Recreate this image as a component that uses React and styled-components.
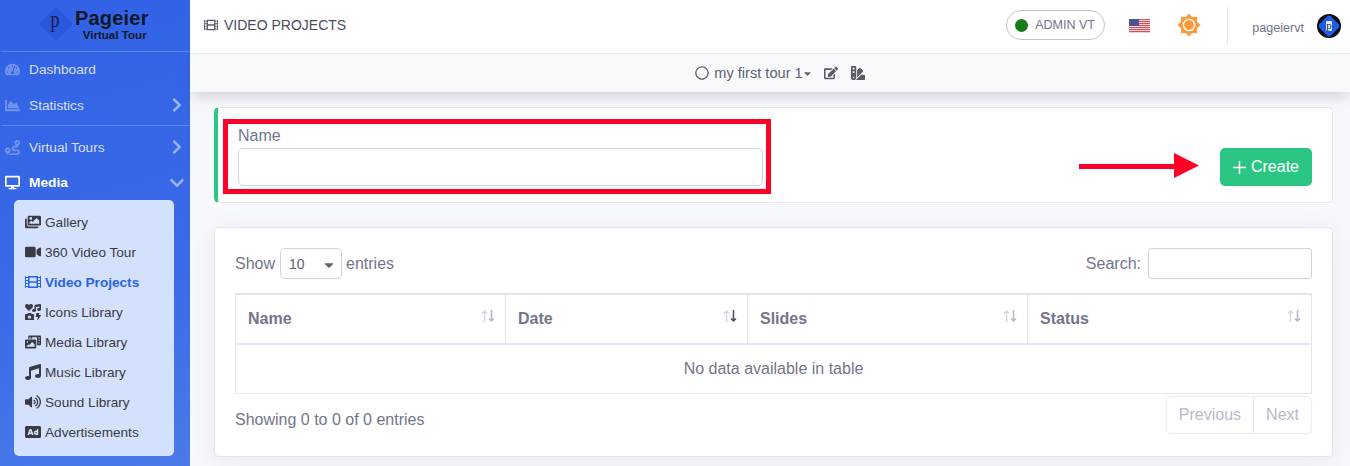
import React from "react";
import styled, { createGlobalStyle } from "styled-components";
import {
  FaTachometerAlt, FaChartArea, FaRoute, FaDesktop, FaChevronRight, FaChevronDown,
  FaImages, FaVideo, FaFilm, FaIcons, FaPhotoVideo, FaMusic, FaVolumeUp, FaAd,
  FaRegCircle, FaEdit, FaSwatchbook, FaCaretDown,
} from "react-icons/fa";

const Global = createGlobalStyle`
  html, body { margin: 0; padding: 0; height: 466px; overflow: hidden; }
  body { font-family: "Liberation Sans", Arial, sans-serif; background: #f7f8fc; color: #74758a; }
  * { box-sizing: border-box; }
`;

const Page = styled.div`display: flex; width: 1350px; height: 466px; overflow: hidden;`;

const Sidebar = styled.aside`
  width: 190px; flex: none; height: 466px; overflow: hidden;
  background: linear-gradient(165deg, #3162e6 0%, #3a6ae7 60%, #4a7be8 100%);
`;
const Brand = styled.div`
  height: 52px; margin: 0 1px; border-bottom: 1px solid rgba(255,255,255,.2);
  display: flex; align-items: flex-start; padding: 6px 0 0 37px; gap: 1px;
`;
const BrandText = styled.div`display: flex; flex-direction: column; align-items: flex-end; color: #111827; font-weight: 700;`;
const BrandName = styled.span`font-size: 20px; line-height: 22px; letter-spacing: .2px; margin-top: 1px;`;
const BrandSub = styled.span`font-size: 11.6px; line-height: 12px; margin-top: 0; padding-right: 2px;`;

const NavItem = styled.div`
  height: ${p => p.$h || 36}px; display: flex; align-items: center; padding: 0 5px 0 5px; font-size: 13.7px;
  color: ${p => p.$active ? "#fff" : "rgba(255,255,255,.8)"};
  font-weight: ${p => p.$active ? 700 : 400};
`;
const NavIcon = styled.span`
  width: 24px; flex: none; display: flex; align-items: center; font-size: 15px;
  color: ${p => p.$active ? "#fff" : "rgba(255,255,255,.3)"};
`;
const NavLabel = styled.span`flex: 1;`;
const Chevron = styled.span`display: flex; width: 16px; justify-content: center; color: rgba(255,255,255,.5); font-size: 16px;`;
const NavDivider = styled.div`height: 1px; background: rgba(255,255,255,.2); margin: 2px 1px 3px;`;

const SubPanel = styled.div`
  margin: 0 16px 0 14px; height: 256px; background: #d3e1fd; border-radius: 5px; padding: 7px 0 0 11px;
`;
const SubItem = styled.div`
  height: 30px; display: flex; align-items: center; font-size: 13.6px; white-space: nowrap;
  color: ${p => p.$active ? "#2b62e6" : "#3a3b45"};
  font-weight: ${p => p.$active ? 700 : 400};
`;
const SubIcon = styled.span`width: 16px; margin-right: 4px; flex: none; display: flex; justify-content: center; font-size: 16px;`;

const Main = styled.main`flex: 1; min-width: 0; display: flex; flex-direction: column; height: 466px;`;
const Topbar = styled.header`
  height: 54px; flex: none; background: #fff; border-bottom: 1px solid #e3e6f0;
  display: flex; align-items: center; padding: 0 9px 1px 14px;
`;
const PageTitle = styled.div`
  display: flex; align-items: center; gap: 6px; flex: 1; font-size: 14px; color: #4a4c5a; padding-bottom: 3px;
  svg { color: #5a5c69; font-size: 14px; }
`;
const StatusPill = styled.div`
  width: 99px; height: 30px; border: 1px solid #c4c4c4; border-radius: 15px; display: flex; align-items: center;
  padding-left: 8px; gap: 7px; font-size: 12.5px; color: #74758a; margin: 0 0 2px -1px;
`;
const Dot = styled.span`width: 13px; height: 13px; border-radius: 50%; background: #167c16;`;
const FlagWrap = styled.span`display: flex; margin-left: 24px; margin-bottom: 1px;`;
const SunWrap = styled.span`display: flex; margin-left: 27px; margin-bottom: 2px;`;
const VSep = styled.span`width: 1px; height: 38px; background: #e3e6f0; margin: 0 24px 0 26px;`;
const UserName = styled.span`font-size: 12.6px; color: #74758a; margin-top: 3px;`;
const AvatarWrap = styled.span`display: flex; margin-left: 13px; margin-bottom: 1px;`;

const Subbar = styled.div`
  height: 38px; flex: none; background: #f8f9fa; box-shadow: 0 8px 12px -2px rgba(58,59,69,.16);
  display: flex; align-items: center; justify-content: center; padding-left: 20px; font-size: 14.6px; color: #5f616f;
  position: relative; z-index: 2;
`;
const TourPick = styled.span`display: flex; align-items: center; gap: 5px; svg { font-size: 14px; }`;
const Caret = styled.span`display: flex; margin-left: -1px; svg { font-size: 11px; }`;
const ToolIcon = styled.span`display: flex; font-size: 14px; margin-left: ${p => p.$ml}px; color: #5a5c69;`;

const Content = styled.div`flex: 1; padding: 15px 17px 0 24px; display: flex; flex-direction: column; gap: 24px; min-height: 0;`;

const FormCard = styled.section`
  position: relative; flex: none; height: 96px; background: #fff; border: 1px solid #e3e6f0; border-left: 4px solid #2bc584; border-radius: 5px;
  display: flex; align-items: flex-start; justify-content: space-between; padding: 19px 20px 0 20px;
`;
const Field = styled.div`display: flex; flex-direction: column; width: 525px;`;
const Label = styled.label`font-size: 16px; line-height: 18px; color: #74758a; margin-bottom: 3px;`;
const TextInput = styled.div`height: 38px; border: 1px solid #d1d3e2; border-radius: 5px; background: #fff;`;
const CreateButton = styled.button`
  width: 92px; height: 38px; margin-top: 21px; border: 0; border-radius: 5px; background: #2bc584; color: #fff;
  font: 16px "Liberation Sans", Arial, sans-serif; display: flex; align-items: center; justify-content: center; gap: 5px;
`;
const RedBox = styled.div`
  position: absolute; left: 5px; top: 11px; width: 548px; height: 75px; border: 5px solid #ff0027; pointer-events: none;
`;
const RedArrow = styled.svg`position: absolute; left: 861px; top: 45px;`;

const TableCard = styled.section`
  flex: none; height: 230px; background: #fff; border: 1px solid #e3e6f0; border-radius: 5px;
  box-shadow: 0 4px 24px rgba(58,59,69,.08); padding: 20px 20px 0 20px;
`;
const ControlRow = styled.div`display: flex; justify-content: space-between; align-items: center; height: 31px; font-size: 16px;`;
const Inline = styled.div`display: flex; align-items: center; gap: 5px;`;
const PageSize = styled.div`
  width: 62px; height: 31px; border: 1px solid #d1d3e2; border-radius: 5px; display: flex; align-items: center;
  justify-content: space-between; padding: 0 5px 0 8px; margin-right: -1px; font-size: 14px; color: #5f616f;
  svg { font-size: 14px; margin-top: 2px; }
`;
const SearchBox = styled.div`width: 164px; height: 31px; border: 1px solid #d1d3e2; border-radius: 3px; margin-left: 2px;`;
const DataTable = styled.table`
  width: 1076px; margin-top: 14px; border-collapse: collapse; table-layout: fixed; font-size: 16px; border: 1px solid #e3e6f0;
  th { height: 50px; text-align: left; font-weight: 700; padding: 0 12px; border: 1px solid #e3e6f0; border-width: 2px 1px; position: relative; color: #74758a; }
  td { height: 49px; text-align: center; color: #74758a; }
`;
const SortIcon = styled.svg`position: absolute; right: 9px; top: 13px;`;
const FooterRow = styled.div`display: flex; justify-content: space-between; align-items: flex-start; font-size: 16px; margin-top: 2px;`;
const Info = styled.div`padding-top: 14px; line-height: 20px;`;
const Pager = styled.div`display: flex; height: 38px; border: 1px solid #e9ebf3; border-radius: 5px; color: #b7b9cc;`;
const PagerBtn = styled.span`
  display: flex; align-items: center; padding: 0 12px; font-size: 16px;
  & + & { border-left: 1px solid #e3e6f0; }
`;

const LogoMark = () => (
  <svg width="36" height="36" viewBox="0 0 36 36">
    <rect x="6" y="6" width="24" height="24" rx="4" transform="rotate(45 18 18)" fill="#2a58dc" />
    <text x="17" y="21" textAnchor="middle" fontFamily="Liberation Serif, serif" fontSize="24" textLength="9" lengthAdjust="spacingAndGlyphs" fill="#15204a">p</text>
  </svg>
);
const Flag = () => (
  <svg width="21" height="14" viewBox="0 0 21 14">
    <rect width="21" height="14" fill="#f3dfe0" />
    {[0, 2, 4, 6, 8, 10, 12].map(y => <rect key={y} y={y} width="21" height="1.1" fill="#d0525f" />)}
    <rect width="10" height="7" fill="#4a5590" />
  </svg>
);
const Sun = () => {
  const pts = [];
  for (let i = 0; i < 16; i++) {
    const r = i % 2 ? 8.6 : 11.6;
    const a = (i * Math.PI) / 8 - Math.PI / 2;
    pts.push(`${12 + r * Math.cos(a)},${12 + r * Math.sin(a)}`);
  }
  return (
    <svg width="24" height="24" viewBox="0 0 24 24">
      <polygon points={pts.join(" ")} fill="#fd9a3c" />
      <circle cx="12" cy="12" r="5.6" fill="#fd9a3c" stroke="#fff" strokeWidth="1.4" />
    </svg>
  );
};
const Avatar = () => (
  <svg width="24" height="24" viewBox="0 0 24 24">
    <circle cx="12" cy="12" r="12" fill="#0a0a14" />
    <rect x="4" y="4" width="16" height="16" rx="2" transform="rotate(45 12 12)" fill="#1d5ee8" />
    <rect x="9" y="7" width="6" height="10" rx="1" fill="#e8ecf8" />
    <text x="12" y="15" textAnchor="middle" fontFamily="Liberation Serif, serif" fontSize="11" fill="#15204a">p</text>
  </svg>
);
const PlusIcon = () => (
  <svg width="13" height="13" viewBox="0 0 13 13" fill="none" stroke="#fff" strokeWidth="1.5">
    <path d="M6.5 0v13M0 6.5h13" />
  </svg>
);
const Sort = ({ active }) => (
  <SortIcon width="16" height="16" viewBox="0 0 16 16" fill="none" strokeWidth="1.5">
    <path d="M4.5 14V3M2 5.5 4.5 3 7 5.5" stroke="#d3d5de" />
    <path d="M11.5 2v11M9 10.5l2.5 2.5 2.5-2.5" stroke={active ? "#4a4c5a" : "#b4b6c4"} />
  </SortIcon>
);

const subItems = [
  [FaImages, "Gallery"], [FaVideo, "360 Video Tour"], [FaFilm, "Video Projects", true],
  [FaIcons, "Icons Library"], [FaPhotoVideo, "Media Library"], [FaMusic, "Music Library"],
  [FaVolumeUp, "Sound Library"], [FaAd, "Advertisements"],
];
const cols = [["Name", 270], ["Date", 242, true], ["Slides", 280], ["Status", 284]];

export default function App() {
  return (
    <>
      <Global />
      <Page>
        <Sidebar>
          <Brand>
            <LogoMark />
            <BrandText>
              <BrandName>Pageier</BrandName>
              <BrandSub>Virtual Tour</BrandSub>
            </BrandText>
          </Brand>
          <NavItem $h={35}><NavIcon><FaTachometerAlt /></NavIcon><NavLabel>Dashboard</NavLabel></NavItem>
          <NavItem><NavIcon><FaChartArea /></NavIcon><NavLabel>Statistics</NavLabel><Chevron><FaChevronRight /></Chevron></NavItem>
          <NavDivider />
          <NavItem><NavIcon><FaRoute /></NavIcon><NavLabel>Virtual Tours</NavLabel><Chevron><FaChevronRight /></Chevron></NavItem>
          <NavItem $active $h={35}><NavIcon $active><FaDesktop /></NavIcon><NavLabel>Media</NavLabel><Chevron><FaChevronDown /></Chevron></NavItem>
          <SubPanel>
            {subItems.map(([Icon, label, active]) => (
              <SubItem key={label} $active={active}><SubIcon><Icon /></SubIcon>{label}</SubItem>
            ))}
          </SubPanel>
        </Sidebar>
        <Main>
          <Topbar>
            <PageTitle><FaFilm />VIDEO PROJECTS</PageTitle>
            <StatusPill><Dot />ADMIN VT</StatusPill>
            <FlagWrap><Flag /></FlagWrap>
            <SunWrap><Sun /></SunWrap>
            <VSep />
            <UserName>pageiervt</UserName>
            <AvatarWrap><Avatar /></AvatarWrap>
          </Topbar>
          <Subbar>
            <TourPick><FaRegCircle />my first tour 1</TourPick>
            <Caret><FaCaretDown /></Caret>
            <ToolIcon $ml={11}><FaEdit /></ToolIcon>
            <ToolIcon $ml={13}><FaSwatchbook /></ToolIcon>
          </Subbar>
          <Content>
            <FormCard>
              <Field>
                <Label>Name</Label>
                <TextInput />
              </Field>
              <CreateButton><PlusIcon />Create</CreateButton>
              <RedBox />
              <RedArrow width="122" height="26" viewBox="0 0 122 26">
                <path d="M0 11h95V0l25 12.5L95 25V16H0z" fill="#ff0027" />
              </RedArrow>
            </FormCard>
            <TableCard>
              <ControlRow>
                <Inline>Show<PageSize>10<FaCaretDown /></PageSize>entries</Inline>
                <Inline>Search:<SearchBox /></Inline>
              </ControlRow>
              <DataTable>
                <colgroup>{cols.map(([n, w]) => <col key={n} style={{ width: w }} />)}</colgroup>
                <thead>
                  <tr>{cols.map(([n, , a]) => <th key={n}>{n}<Sort active={a} /></th>)}</tr>
                </thead>
                <tbody><tr><td colSpan={4}>No data available in table</td></tr></tbody>
              </DataTable>
              <FooterRow>
                <Info>Showing 0 to 0 of 0 entries</Info>
                <Pager><PagerBtn>Previous</PagerBtn><PagerBtn>Next</PagerBtn></Pager>
              </FooterRow>
            </TableCard>
          </Content>
        </Main>
      </Page>
    </>
  );
}
